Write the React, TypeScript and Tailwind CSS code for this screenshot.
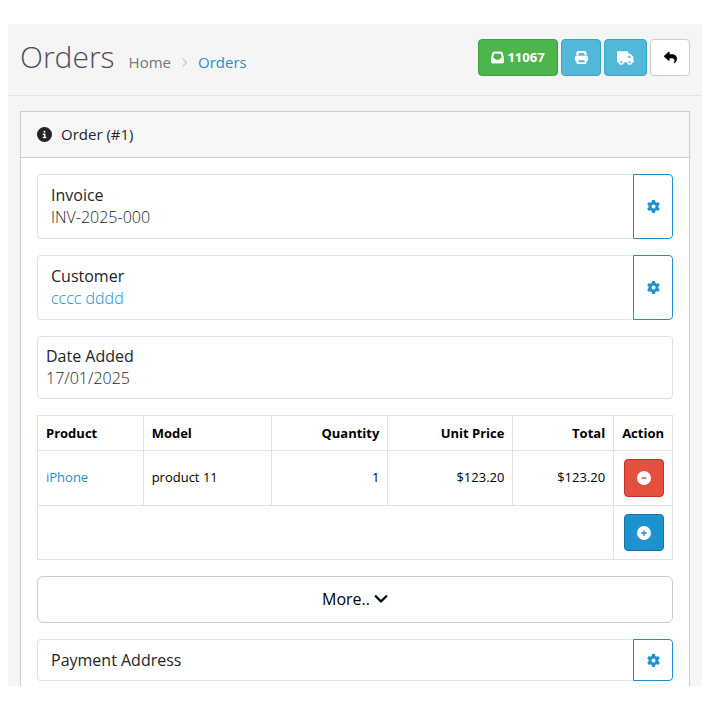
import React from "react";
import {
  FaAngleRight,
  FaChevronDown,
  FaCircleInfo,
  FaCircleMinus,
  FaCirclePlus,
  FaGear,
  FaInbox,
  FaPrint,
  FaReply,
  FaTruck,
} from "react-icons/fa6";

type FieldProps = {
  label: string;
  children?: React.ReactNode;
};

function EditableField({ label, children }: FieldProps) {
  return (
    <div className="flex">
      <div className="grow rounded-l border border-r-0 border-[#dee2e6] px-[13px] py-[9px] text-base">
        <div className="leading-[22px] text-[#212529]">{label}</div>
        {children && <div className="font-light leading-[23px]">{children}</div>}
      </div>
      <button
        type="button"
        aria-label={`Edit ${label}`}
        className="flex w-10 items-center justify-center rounded-r border border-[#1e91cf] text-[13px] text-[#1e91cf]"
      >
        <FaGear />
      </button>
    </div>
  );
}

export default function App() {
  return (
    <div className="bg-white px-2 py-6 font-['Open_Sans','Noto_Sans',sans-serif] text-[13px] text-black">
      <div className="bg-[#f5f5f5]">
        <header className="flex items-start justify-between border-b border-[#e4e4e4] px-3 pt-[15px] pb-[19px]">
          <div className="flex items-baseline">
            <h1 className="text-[30px] font-light leading-[35px] text-[#4c4d5a]">Orders</h1>
            <nav aria-label="Breadcrumb" className="ml-[14px] flex items-center text-[15px]">
              <a href="#home" className="text-[#777777]">Home</a>
              <FaAngleRight className="mx-2 text-[11px] text-[#cccccc]" />
              <a href="#orders" className="text-[#1e91cf]">Orders</a>
            </nav>
          </div>
          <div className="flex gap-[3px]">
            <button
              type="button"
              className="flex h-[37px] w-20 items-center justify-center gap-[3px] rounded border border-[#3fa03f] bg-[#4cb64c] font-bold text-white"
            >
              <FaInbox className="stroke-white [stroke-width:16]" />
              11067
            </button>
            <button
              type="button"
              aria-label="Print"
              className="flex h-[37px] w-10 items-center justify-center rounded border border-[#31a6c8] bg-[#53b7d8] text-white"
            >
              <FaPrint className="stroke-white [stroke-width:20]" />
            </button>
            <button
              type="button"
              aria-label="Shipping"
              className="flex h-[37px] w-[43px] items-center justify-center rounded border border-[#31a6c8] bg-[#53b7d8] text-white"
            >
              <FaTruck className="h-[14px] w-[17px] stroke-white [stroke-width:16]" />
            </button>
            <button
              type="button"
              aria-label="Back"
              className="flex h-[37px] w-10 items-center justify-center rounded border border-[#cccccc] bg-white"
            >
              <FaReply />
            </button>
          </div>
        </header>

        <main className="px-3 pt-[15px]">
          <section className="border border-b-0 border-[#cccccc] bg-white">
            <h2 className="flex h-[46px] items-center gap-[9px] border-b border-[#cccccc] bg-[#f7f7f7] px-4 text-[15px] text-[#212529]">
              <FaCircleInfo />
              Order (#1)
            </h2>
            <div className="flex flex-col gap-4 px-4 pt-4 pb-[5px]">
              <EditableField label="Invoice">
                <span className="text-[#212529]">INV-2025-000</span>
              </EditableField>
              <EditableField label="Customer">
                <a href="#customer" className="text-[#1e91cf]">cccc dddd</a>
              </EditableField>
              <div className="rounded border border-[#dee2e6] p-2 text-base text-[#212529]">
                <div className="leading-[22px]">Date Added</div>
                <div className="font-light leading-[23px]">17/01/2025</div>
              </div>

              <table className="w-full border-collapse [&_td]:border [&_td]:border-[#dee2e6] [&_td]:p-2 [&_th]:border [&_th]:border-[#dee2e6] [&_th]:px-2 [&_th]:py-[7px] [&_th]:leading-5">
                <thead>
                  <tr>
                    <th className="text-left">Product</th>
                    <th className="text-left">Model</th>
                    <th className="text-right">Quantity</th>
                    <th className="text-right">Unit Price</th>
                    <th className="text-right">Total</th>
                    <th className="text-right">Action</th>
                  </tr>
                </thead>
                <tbody>
                  <tr>
                    <td><a href="#iphone" className="text-[#1e91cf]">iPhone</a></td>
                    <td>product 11</td>
                    <td className="text-right">1</td>
                    <td className="text-right">$123.20</td>
                    <td className="text-right">$123.20</td>
                    <td className="w-px">
                      <button
                        type="button"
                        aria-label="Remove product"
                        className="ml-auto flex h-[38px] w-10 items-center justify-center rounded border border-[#c9302c] bg-[#e3503e] text-sm text-white"
                      >
                        <FaCircleMinus />
                      </button>
                    </td>
                  </tr>
                  <tr>
                    <td colSpan={5}></td>
                    <td>
                      <button
                        type="button"
                        aria-label="Add product"
                        className="ml-auto flex h-[37px] w-10 items-center justify-center rounded border border-[#1872a2] bg-[#1e91cf] text-sm text-white"
                      >
                        <FaCirclePlus />
                      </button>
                    </td>
                  </tr>
                </tbody>
              </table>

              <button
                type="button"
                className="flex items-center justify-center gap-1 rounded-md border border-[#cccccc] py-[11px] text-base leading-[23px]"
              >
                More..
                <FaChevronDown className="mb-[3px] text-[14px] stroke-black [stroke-width:24]" />
              </button>

              <EditableField label="Payment Address" />
            </div>
          </section>
        </main>
      </div>
    </div>
  );
}
